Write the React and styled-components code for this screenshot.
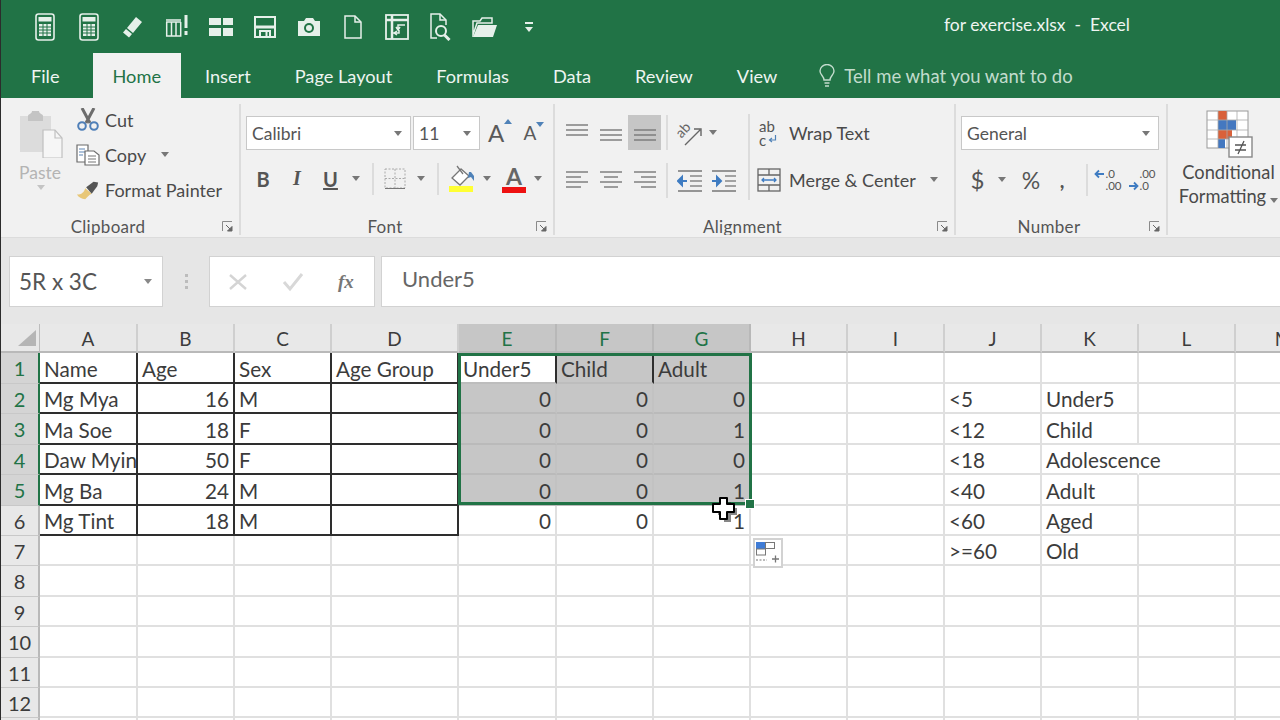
import React from "react";
import styled, { createGlobalStyle } from "styled-components";

const Global = createGlobalStyle`
  html, body { margin: 0; padding: 0; background: #fff; }
  * { box-sizing: border-box; }
`;

const Window = styled.div`
  width: 1280px; height: 720px; overflow: hidden;
  border-left: 1px solid #2c2c2c;
  font-family: Lato, "Open Sans", sans-serif;
  color: #444; background: #fff;
  display: flex; flex-direction: column;
`;
const TitleBar = styled.div`
  height: 53px; flex: none; background: #217346;
  display: flex; align-items: center;
`;
const Qat = styled.div`display: flex; align-items: center; padding-left: 22px;`;
const QatButton = styled.div`
  width: 44px; height: 30px; display: flex; align-items: center; justify-content: center;
`;
const Title = styled.div`
  margin-left: auto; padding: 0 150px 5px 0; color: #eef5f1; font-size: 17.5px; white-space: pre;
`;
const TabBar = styled.div`
  height: 45px; flex: none; background: #217346; display: flex; padding-left: 8px;
`;
const Tab = styled.div`
  height: 45px; padding: 0 ${p => (p.$active ? 20 : 22)}px;
  margin-right: ${p => p.$gap || 0}px;
  display: flex; align-items: center; font-size: 18.2px;
  color: ${p => (p.$active ? "#217346" : "#eef5f1")};
  background: ${p => (p.$active ? "#f1f1f1" : "transparent")};
`;
const TellMe = styled.div`
  display: flex; align-items: center; gap: 9px; margin-left: 20px;
  color: #c2dccd; font-size: 18.5px;
`;
const Ribbon = styled.div`
  height: 140px; flex: none; background: #f1f1f1; display: flex; padding: 6px 0 2px;
  border-bottom: 1px solid #dcdcdc;
`;
const Group = styled.div`
  width: ${p => p.$w}px; flex: none; display: flex; flex-direction: column; overflow: hidden;
  border-right: ${p => (p.$last ? "none" : "2px solid #dcdcdc")};
`;
const GroupBody = styled.div`
  flex: 1; min-height: 0; display: flex; padding-left: ${p => p.$pl || 0}px;
`;
const GroupFooter = styled.div`display: flex; align-items: center; height: 18px; flex: none;`;
const GroupLabel = styled.div`
  flex: 1; text-align: center; font-size: 17px; color: #555; letter-spacing: .3px;
`;
const Launcher = styled.div`width: 24px; flex: none; display: flex; justify-content: center;`;

const PasteCol = styled.div`
  width: 80px; flex: none; padding-top: 6px; display: flex; flex-direction: column; align-items: center;
  color: #b4b4b4; font-size: 17.5px;
`;
const PasteLabel = styled.div`margin-top: 3px; padding-right: 2px; line-height: 24px;`;
const ClipCol = styled.div`display: flex; flex-direction: column; margin: -2px 0 0 -5px;`;
const ClipRow = styled.div`
  height: 35px; display: flex; align-items: center; gap: 5px; font-size: 18px; color: #4a4a4a;
`;
const ClipIcon = styled.div`width: 24px; display: flex; justify-content: center;`;

const Caret = styled.span`
  display: inline-block; width: 0; height: 0;
  border-left: 4px solid transparent; border-right: 4px solid transparent;
  border-top: 5px solid ${p => p.$c || "#777"};
  margin-left: ${p => p.$ml || 0}px;
`;
const CaretUp = styled(Caret)`transform: rotate(180deg);`;
const Stack = styled.div`display: flex; flex-direction: column; flex: none; width: ${p => (p.$w ? `${p.$w}px` : "auto")}; gap: ${p => p.$gap || 0}px; padding-top: ${p => p.$pt || 0}px;`;
const Row = styled.div`display: flex; align-items: center; height: ${p => p.$h || 35}px;`;
const Btn = styled.div`
  width: ${p => p.$w}px; height: 35px; flex: none;
  display: flex; align-items: center; justify-content: center;
  background: ${p => (p.$on ? "#c6c6c6" : "transparent")};
  color: #555; font-size: ${p => p.$fs || 20}px;
  font-weight: ${p => p.$fw || 400}; font-style: ${p => p.$it ? "italic" : "normal"};
  font-family: ${p => p.$serif ? '"Liberation Serif", serif' : "inherit"};
  text-decoration: ${p => p.$ul ? "underline" : "none"};
`;
const VSep = styled.div`
  width: 2px; flex: none; height: ${p => p.$h || 32}px; background: #dcdcdc;
  margin: ${p => p.$mt || 0}px ${p => p.$mr ?? 5}px 0 ${p => p.$ml ?? 5}px;
`;
const Select = styled.div`
  width: ${p => p.$w}px; height: 34px; flex: none; margin-right: ${p => p.$mr || 0}px;
  background: #fff; border: 1px solid #c8c8c8;
  display: flex; align-items: center; justify-content: space-between;
  padding: 0 8px 0 5px; font-size: 17.5px; color: #555;
`;
const GrowA = styled.div`
  width: ${p => p.$w}px; display: flex; align-items: flex-start; justify-content: center;
  margin-left: ${p => p.$ml || 0}px;
  font-size: ${p => p.$fs}px; color: #5a5a5a; line-height: 1.15;
`;
const WideRow = styled.div`
  height: 35px; display: flex; align-items: center; font-size: 18px; color: #4a4a4a;
`;
const WideIcon = styled.div`width: 34px; flex: none; display: flex; justify-content: center; padding-right: 6px;`;
const AlignRight = styled.div`
  display: flex; flex-direction: column; gap: 12px; padding-top: 11px; margin-left: 5px;
`;
const StylesBody = styled.div`
  display: flex; flex-direction: column; align-items: center; padding: 6px 0 0 8px; width: 113px;
  font-size: 18.3px; line-height: 24px; color: #4a4a4a; white-space: nowrap;
`;
const StylesIcon = styled.div`height: 48px; margin-left: 2px; margin-bottom: 2px;`;

/* small glyph clusters that are real text next to a drawing */
const ColorGlyph = styled.div`
  width: 24px; display: flex; flex-direction: column; align-items: center;
  font-size: 23px; font-weight: 700; color: #666; line-height: 23px;
`;
const ColorBar = styled.div`width: 24px; height: 6px; background: #ee1111; margin-top: -1px;`;
const OrientBox = styled.div`
  position: relative; width: 28px; height: 26px;
`;
const OrientText = styled.span`
  position: absolute; left: 0; top: 1px; font-size: 14px; line-height: 17px; color: #666;
  transform: rotate(-48deg);
`;
const WrapGlyph = styled.div`
  width: 20px; font-size: 15px; line-height: 14px; color: #555; display: flex; flex-direction: column;
`;
const WrapLine = styled.div`display: flex; align-items: center; gap: 2px;`;
const DecimalBox = styled.div`
  display: grid; grid-template-columns: 11px auto; justify-content: center; font-size: 11.5px; line-height: 12px; color: #555;
  align-items: center; text-align: left;
`;

const FormulaBar = styled.div`
  height: 86px; flex: none; background: #e6e6e6;
  display: flex; padding: 18px 0 17px 8px; align-items: stretch;
`;
const Box = styled.div`
  background: #fff; border: 1px solid #d2d2d2; display: flex; align-items: center;
`;
const NameBox = styled(Box)`
  width: 154px; padding: 0 10px 0 9px; justify-content: space-between;
  font-size: 22.5px; color: #555; flex: none;
`;
const Dots = styled.div`
  width: 46px; flex: none; display: flex; align-items: center; justify-content: center;
`;
const DotStack = styled.div`display: flex; flex-direction: column; gap: 3px;
  & > i { width: 3px; height: 3px; background: #bcbcbc; display: block; }`;
const FxBox = styled(Box)`width: 166px; flex: none; padding-left: 18px; gap: 34px;`;
const Fx = styled.span`
  font-family: "Liberation Serif", serif; font-style: italic; font-weight: 700; font-size: 19px; color: #777;
`;
const FormulaInput = styled(Box)`
  flex: 1; margin-left: 6px; padding: 0 0 6px 20px; font-size: 22px; color: #666; border-right: none;
`;

const Sheet = styled.div`
  position: relative; display: grid; flex: 1; min-height: 0;
  grid-template-columns: 39px 98px 97px 97px 127px 98px 97px 97px 97px 97px 97px 97px 97px 97px;
  grid-template-rows: 29px 31px 30px 31px 30px 31px 30px 30px 31px 30px 31px 30px 30px;
  font-size: 20.7px; color: #3c3c3c;
`;
const Corner = styled.div`
  background: #e8e8e8; display: flex; align-items: flex-end; justify-content: flex-end; padding: 0 3px 5px 0;
  border-bottom: 2px solid #b9b9b9; border-right: 1px solid #bdbdbd;
`;
const ColHead = styled.div`
  display: flex; align-items: center; justify-content: center; font-size: 19px; padding-top: 1px;
  background: ${p => (p.$sel ? "#c6c6c6" : "#e8e8e8")};
  color: ${p => (p.$sel ? "#217346" : "#3c3c3c")};
  border-right: 2px solid ${p => (p.$sel ? "#b8b8b8" : "#cfcfcf")};
  border-bottom: 2px solid #b9b9b9;
`;
const RowHead = styled.div`
  display: flex; align-items: center; justify-content: center; font-size: 20px;
  background: ${p => (p.$sel ? "#d4d4d4" : "#e8e8e8")};
  color: ${p => (p.$sel ? "#217346" : "#3c3c3c")};
  border-right: 2px solid ${p => (p.$sel ? "#217346" : "#b9b9b9")};
  border-bottom: 1px solid #c8c8c8;
`;
const Cell = styled.div`
  display: flex; align-items: center; white-space: nowrap; min-width: 0;
  padding: 2px 4px 0;
  justify-content: ${p => (p.$num ? "flex-end" : "flex-start")};
  background: ${p => (p.$grey ? "#c6c6c6" : "transparent")};
  border-right: 2px solid ${p => p.$r || "#e0e0e0"};
  border-bottom: 2px solid ${p => p.$b || "#e0e0e0"};
`;
const Selection = styled.div`
  position: absolute; inset: 0 -1px 1px -1px; grid-column: 6 / 9; grid-row: 2 / 7;
  border: 3px solid #217346; pointer-events: none;
`;
const Handle = styled.div`
  position: absolute; right: -5px; bottom: -6px; width: 8px; height: 8px;
  background: #217346; outline: 1px solid #fff;
`;
const PasteOptions = styled.div`
  position: absolute; grid-column: 9; grid-row: 8; top: 2px; left: 2px; width: 30px; height: 30px;
  background: #fff; border: 2px solid #d2d2d2; display: flex; align-items: center; justify-content: center;
`;
const Pointer = styled.div`
  position: absolute; grid-column: 8; grid-row: 7; left: 58px; top: -9px; width: 26px; height: 26px;
`;

/* ---------- icons ---------- */
const Q = "#e6f0ea";
const Calc = () => (
  <svg width="20" height="28" viewBox="0 0 20 28" fill="none">
    <rect x="1" y="1" width="18" height="26" rx="2.5" stroke={Q} strokeWidth="1.6" />
    <rect x="3.5" y="4" width="13" height="4.5" fill={Q} />
    <path d="M4 11h12v12H4z" fill={Q} />
    <path d="M4 14h12M4 17h12M4 20h12M8 11v12M12 11v12" stroke="#217346" strokeWidth="1" />
  </svg>
);
const Eraser = () => (
  <svg width="22" height="24" viewBox="0 0 22 24">
    <path d="M14 2l6 5-9 11-6-5z" fill={Q} />
    <path d="M4 14l6 5-3 3.500-6-5z" fill={Q} />
  </svg>
);
const ColsBang = () => (
  <svg width="24" height="26" viewBox="0 0 24 26" fill="none">
    <path d="M1 6h15M1 8h15M1.700 8v14h14V8M6.500 8v14M11 8v14" stroke={Q} strokeWidth="1.500" />
    <path d="M21 1v13" stroke={Q} strokeWidth="3" />
    <rect x="19.500" y="17" width="3" height="4" fill={Q} />
  </svg>
);
const Blocks = () => (
  <svg width="24" height="20" viewBox="0 0 24 20" fill={Q}>
    <rect x="0" y="1" width="12" height="7" /><rect x="0" y="11" width="12" height="8" />
    <rect x="14" y="1" width="10" height="7" /><rect x="14" y="11" width="10" height="8" />
  </svg>
);
const Save = () => (
  <svg width="22" height="22" viewBox="0 0 22 22" fill="none" stroke={Q} strokeWidth="2">
    <rect x="1" y="1" width="20" height="20" />
    <path d="M1 11h20" strokeWidth="3" />
    <path d="M6 21v-6h10v6" />
    <path d="M12.500 16v4" />
  </svg>
);
const Camera = () => (
  <svg width="24" height="20" viewBox="0 0 24 20">
    <path d="M1 4h6l2-3h7l2 3h5v15H1z" fill={Q} />
    <circle cx="12" cy="11" r="5" fill="#217346" />
    <circle cx="12" cy="11" r="3" fill={Q} />
  </svg>
);
const NewDoc = () => (
  <svg width="18" height="24" viewBox="0 0 18 24" fill="none" stroke={Q} strokeWidth="1.500">
    <path d="M1 1h10l6 6v16H1z" /><path d="M11 1v6h6" />
  </svg>
);
const Pivot = () => (
  <svg width="24" height="26" viewBox="0 0 24 26" fill="none" stroke={Q}>
    <rect x="1" y="1" width="22" height="24" strokeWidth="1.800" />
    <path d="M1 6h22M7 1v24" strokeWidth="2.500" />
    <path d="M20 11h-7v4M11 13l2 3 2-3M6 19h8v-3M12 21l-3-2 3-2" strokeWidth="1.500" />
  </svg>
);
const Preview = () => (
  <svg width="22" height="28" viewBox="0 0 22 28" fill="none" stroke={Q} strokeWidth="1.500">
    <path d="M7 25H1V1h9l6 6v5" /><path d="M10 1v6h6" />
    <circle cx="11" cy="18" r="5" strokeWidth="2" />
    <path d="M14.500 22l5 5" strokeWidth="3" />
  </svg>
);
const Folder = () => (
  <svg width="26" height="22" viewBox="0 0 26 22">
    <path d="M1 21V5h7l2-3h10v5H5L1 19z" fill="none" stroke={Q} strokeWidth="1.500" />
    <path d="M1 21l5-12h19l-4 12z" fill={Q} />
  </svg>
);
const QatMore = () => (
  <svg width="10" height="12" viewBox="0 0 10 12" fill={Q}>
    <rect x="1" y="1" width="8" height="2" /><path d="M1 6h8l-4 5z" />
  </svg>
);
const Bulb = () => (
  <svg width="16" height="24" viewBox="0 0 16 24" fill="none" stroke="#c2dccd" strokeWidth="1.400">
    <path d="M5 16c0-4-4-5-4-9a7 6.500 0 0 1 14 0c0 4-4 5-4 9z" />
    <path d="M5.500 19h5M6 22h4" />
  </svg>
);
const LauncherIcon = () => (
  <svg width="11" height="11" viewBox="0 0 11 11" fill="none">
    <path d="M.5 10V.5H10" stroke="#8a8a8a" />
    <path d="M4 4l5 5M10 5.500V10H5.500z" stroke="#666" fill="#666" />
  </svg>
);
const PasteIcon = () => (
  <svg width="44" height="48" viewBox="0 0 44 48">
    <path d="M1 6h31v36H1z" fill="#dcdcdc" />
    <path d="M9 6c0-2 4-2 4-5h7c0 3 4 3 4 5v5H9z" fill="#c4c4c4" />
    <path d="M24 20h12l7 8v20H24z" fill="#f6f6f6" stroke="#c0c0c0" strokeWidth="1.200" />
    <path d="M36 20v8h7" fill="none" stroke="#c0c0c0" strokeWidth="1.200" />
  </svg>
);
const Scissors = () => (
  <svg width="24" height="23" viewBox="0 0 24 23" fill="none">
    <path d="M6 0l8 15M18 0l-8 15" stroke="#6d6d6d" strokeWidth="3" />
    <circle cx="6" cy="18" r="3.800" stroke="#4f7fb8" strokeWidth="2" />
    <circle cx="18" cy="18" r="3.800" stroke="#4f7fb8" strokeWidth="2" />
  </svg>
);
const CopyIcon = () => (
  <svg width="24" height="22" viewBox="0 0 24 22" fill="#fff" stroke="#6b6b6b" strokeWidth="1.200">
    <path d="M1 1h11v17H1z" />
    <path d="M3 5h6M3 8h6M3 11h4" stroke="#5f86b6" />
    <path d="M9 7h9l5 4v10H9z" />
    <path d="M12 12h8M12 15h8M12 18h8" stroke="#777" />
  </svg>
);
const Brush = () => (
  <svg width="26" height="20" viewBox="0 0 26 20">
    <path d="M1 15c5 0 8-3 9-7l7 6c-3 1-5 4-7 6-4 0-7-2-9-5z" fill="#e8c777" />
    <path d="M11 7l8-6 5 1-1 4-6 8z" fill="#555" />
  </svg>
);
const BordersIcon = () => (
  <svg width="22" height="22" viewBox="0 0 22 22" fill="none" stroke="#aaa" strokeDasharray="2 1.500">
    <rect x="1" y="1" width="20" height="19" /><path d="M11 1v19M1 10.500h20" />
    <path d="M1 20.500h20" stroke="#777" strokeDasharray="none" />
  </svg>
);
const FillIcon = () => (
  <svg width="26" height="28" viewBox="0 0 26 28" fill="none">
    <path d="M12 4l-9 9 8 7 9-9z" fill="#fff" stroke="#777" strokeWidth="1.300" />
    <path d="M8 1l6 8" stroke="#777" strokeWidth="1.300" />
    <path d="M20 7h2l3 4v5l-3-4-3 1z" fill="#4f82b8" />
    <rect x="0" y="21" width="24" height="6" fill="#ffff33" />
  </svg>
);
const Lines = ({ widths, y = 0, h = 20, align = "left", c = "#777" }) => {
  const w = 22;
  return (
    <svg width={w} height={h} viewBox={`0 0 ${w} ${h}`} fill="none" stroke={c} strokeWidth="1.400">
      {widths.map((lw, i) => {
        const x = align === "left" ? 0 : align === "right" ? w - lw : (w - lw) / 2;
        return <path key={i} d={`M${x} ${y + i * 5 + 1}h${lw}`} />;
      })}
    </svg>
  );
};
const OrientArrow = () => (
  <svg width="28" height="26" viewBox="0 0 28 26" fill="none">
    <path d="M10 25L25 10M19 9h7v7" stroke="#666" strokeWidth="1.400" />
  </svg>
);
const Dent = ({ flip }) => (
  <svg width="26" height="22" viewBox="0 0 26 22" fill="none">
    <path d="M1 1h24M1 21h24" stroke="#777" strokeWidth="1.500" />
    <path d={flip ? "M14 6h11M14 11h11M14 16h11" : "M13 6h12M13 11h12M13 16h12"} stroke="#888" strokeWidth="1.400" />
    {flip
      ? <path d="M1 11h6M6 7l4 4-4 4z" stroke="#3f7cc2" strokeWidth="2" fill="#3f7cc2" />
      : <path d="M10 11H4M5 7l-4 4 4 4z" stroke="#3f7cc2" strokeWidth="2" fill="#3f7cc2" />}
  </svg>
);
const ReturnArrow = () => (
  <svg width="9" height="9" viewBox="0 0 9 9" fill="none" stroke="#4f82b8" strokeWidth="1.200">
    <path d="M7.500 0v5H2M4 3L1.500 5 4 7" />
  </svg>
);
const MergeIcon = () => (
  <svg width="24" height="24" viewBox="0 0 24 24" fill="none" stroke="#666" strokeWidth="1.300">
    <rect x="1" y="1" width="22" height="22" />
    <path d="M1 7h22M1 17h22M12 1v6M12 17v6" />
    <path d="M5 12h14M7 10l-2 2 2 2M17 10l2 2-2 2" stroke="#3f7cc2" />
  </svg>
);
const ArrowLeft = () => (
  <svg width="11" height="10" viewBox="0 0 11 10" fill="none" stroke="#3f7cc2" strokeWidth="1.800"><path d="M10 5H2M5 1.500L1.500 5 5 8.500" /></svg>
);
const ArrowRight = () => (
  <svg width="11" height="10" viewBox="0 0 11 10" fill="none" stroke="#3f7cc2" strokeWidth="1.800"><path d="M1 5h8M6 1.500L9.500 5 6 8.500" /></svg>
);
const CondFormat = () => (
  <svg width="48" height="48" viewBox="0 0 48 48">
    <rect x="1" y="1" width="41" height="37" fill="#fff" stroke="#999" />
    <rect x="12" y="1" width="9" height="9" fill="#d9613a" />
    <rect x="12" y="10" width="18" height="10" fill="#4478c0" />
    <rect x="12" y="20" width="14" height="9" fill="#d9613a" />
    <rect x="12" y="29" width="7" height="9" fill="#4478c0" />
    <path d="M1 10h41M1 20h41M1 29h41M12 1v37M21 1v37M31 1v37" stroke="#aaa" fill="none" strokeWidth=".8" />
    <rect x="23" y="27" width="23" height="20" fill="#fff" stroke="#888" strokeWidth="1.400" />
    <path d="M29 35h11M29 40h11M38 31l-6 13" stroke="#555" strokeWidth="1.300" fill="none" />
  </svg>
);
const CornerTri = () => (
  <svg width="18" height="16" viewBox="0 0 18 16"><path d="M18 0v16H0z" fill="#b5b5b5" /></svg>
);
const X = () => (
  <svg width="20" height="20" viewBox="0 0 20 20" stroke="#d4d4d4" strokeWidth="2.400"><path d="M2 3l16 14M18 3L2 17" /></svg>
);
const Check = () => (
  <svg width="22" height="20" viewBox="0 0 22 20" fill="none" stroke="#d8d8d8" strokeWidth="3"><path d="M2 10l6 7L20 2" /></svg>
);
const PasteOptIcon = () => (
  <svg width="24" height="22" viewBox="0 0 24 22" fill="none">
    <rect x="0.500" y="0.500" width="9" height="6" fill="#3f7cd6" stroke="#3f7cd6" />
    <rect x="9.500" y="0.500" width="9" height="6" fill="#fff" stroke="#777" />
    <rect x="0.500" y="7" width="9" height="6" fill="#fff" stroke="#777" />
    <path d="M0 18h11" stroke="#777" strokeDasharray="2 1.500" />
    <path d="M16 17h7M19.500 13.500v7" stroke="#777" strokeWidth="1.300" />
  </svg>
);
const CrossCursor = () => (
  <svg width="26" height="26" viewBox="0 0 26 26">
    <path d="M10 3h7v6h6v7h-6v7h-7v-7H4V9h6z" fill="#222" opacity=".55" transform="translate(2 2)" />
    <path d="M8 1h7v6h7v8h-7v7H8v-7H1V7h7z" fill="#fff" stroke="#000" strokeWidth="2" strokeLinejoin="round" />
  </svg>
);

/* ---------- data ---------- */
const colNames = ["A", "B", "C", "D", "E", "F", "G", "H", "I", "J", "K", "L", "M"];
const tableRows = [
  ["Name", "Age", "Sex", "Age Group", "Under5", "Child", "Adult"],
  ["Mg Mya", 16, "M", "", 0, 0, 0],
  ["Ma Soe", 18, "F", "", 0, 0, 1],
  ["Daw Myin", 50, "F", "", 0, 0, 0],
  ["Mg Ba", 24, "M", "", 0, 0, 1],
  ["Mg Tint", 18, "M", "", 0, 0, 1],
];
const lookup = [
  ["<5", "Under5"], ["<12", "Child"], ["<18", "Adolescence"],
  ["<40", "Adult"], ["<60", "Aged"], [">=60", "Old"],
];
const DARK = "#2e2e2e";

function cellFor(r, c) {
  const base = tableRows[r - 1]?.[c];
  const lk = r >= 2 && r <= 7 && (c === 9 || c === 10) ? lookup[r - 2][c - 9] : undefined;
  const text = base !== undefined ? base : lk ?? "";
  const props = { $num: typeof text === "number" };
  if (r <= 6 && c <= 3) { props.$r = DARK; props.$b = DARK; }
  if (r === 1 && (c === 4 || c === 5)) props.$r = DARK;
  const inSel = r <= 5 && c >= 4 && c <= 6;
  if (inSel && !(r === 1 && c === 4)) props.$grey = true;
  if (inSel && r > 1) { props.$r = "#c2c2c2"; props.$b = "#bababa"; }
  if (r === 1 && c >= 4 && c <= 6) props.$b = "#bdbdbd";
  if (r === 4 && c === 10) props.$r = "transparent";
  return { text, props };
}

const rowsCount = 13;

export default function App() {
  return (
    <Window>
      <Global />
      <TitleBar>
        <Qat>
          {[<Calc />, <Calc />, <Eraser />, <ColsBang />, <Blocks />, <Save />, <Camera />, <NewDoc />, <Pivot />, <Preview />, <Folder />, <QatMore />].map((ic, i) => (
            <QatButton key={i}>{ic}</QatButton>
          ))}
        </Qat>
        <Title>for exercise.xlsx  -  Excel</Title>
      </TitleBar>
      <TabBar>
        <Tab $gap={11}>File</Tab>
        <Tab $active $gap={2}>Home</Tab>
        <Tab>Insert</Tab>
        <Tab>Page Layout</Tab>
        <Tab>Formulas</Tab>
        <Tab>Data</Tab>
        <Tab>Review</Tab>
        <Tab>View</Tab>
        <TellMe><Bulb />Tell me what you want to do</TellMe>
      </TabBar>

      <Ribbon>
        <Group $w={240}>
          <GroupBody>
            <PasteCol>
              <PasteIcon />
              <PasteLabel>Paste</PasteLabel>
              <Caret $c="#c4c4c4" />
            </PasteCol>
            <ClipCol>
              <ClipRow><ClipIcon><Scissors /></ClipIcon>Cut</ClipRow>
              <ClipRow><ClipIcon><CopyIcon /></ClipIcon>Copy<Caret $ml={10} /></ClipRow>
              <ClipRow><ClipIcon><Brush /></ClipIcon>Format Painter</ClipRow>
            </ClipCol>
          </GroupBody>
          <GroupFooter><GroupLabel>Clipboard</GroupLabel><Launcher><LauncherIcon /></Launcher></GroupFooter>
        </Group>

        <Group $w={314}>
          <GroupBody $pl={5}>
            <Stack $pt={12} $gap={11}>
              <Row $h={34}>
                <Select $w={165} $mr={2}>Calibri<Caret /></Select>
                <Select $w={67}>11<Caret /></Select>
                <GrowA $w={36} $fs={24} $ml={2}>A<CaretUp $c="#4f82b8" /></GrowA>
                <GrowA $w={32} $fs={19}>A<Caret $c="#4f82b8" /></GrowA>
              </Row>
              <Row>
                <Btn $w={34} $fw={700}>B</Btn>
                <Btn $w={34} $it $serif $fw={700}>I</Btn>
                <Btn $w={33} $fw={700} $ul>U</Btn>
                <Btn $w={18}><Caret /></Btn>
                <VSep $ml={7} $mr={7} />
                <Btn $w={28}><BordersIcon /></Btn>
                <Btn $w={24}><Caret /></Btn>
                <VSep $ml={4} $mr={4} />
                <Btn $w={38}><FillIcon /></Btn>
                <Btn $w={12}><Caret /></Btn>
                <Btn $w={42}><ColorGlyph>A<ColorBar /></ColorGlyph></Btn>
                <Btn $w={6}><Caret /></Btn>
              </Row>
            </Stack>
          </GroupBody>
          <GroupFooter><GroupLabel>Font</GroupLabel><Launcher><LauncherIcon /></Launcher></GroupFooter>
        </Group>

        <Group $w={401}>
          <GroupBody $pl={5}>
            <Stack $pt={11} $gap={13} $w={188}>
              <Row>
                <Btn $w={34}><Lines widths={[22, 22, 22]} y={1} /></Btn>
                <Btn $w={34}><Lines widths={[22, 22, 22]} y={6} /></Btn>
                <Btn $w={33} $on><Lines widths={[22, 22, 22]} y={9} h={26} /></Btn>
                <VSep $h={35} />
                <Btn $w={32}><OrientBox><OrientArrow /><OrientText>ab</OrientText></OrientBox></Btn>
                <Btn $w={16}><Caret /></Btn>
              </Row>
              <Row>
                <Btn $w={34}><Lines widths={[22, 15, 22, 15]} /></Btn>
                <Btn $w={34}><Lines widths={[22, 14, 22, 14]} align="center" /></Btn>
                <Btn $w={33}><Lines widths={[22, 15, 22, 15]} align="right" /></Btn>
                <VSep $h={35} />
                <Btn $w={34}><Dent /></Btn>
                <Btn $w={34}><Dent flip /></Btn>
              </Row>
            </Stack>
            <VSep $h={86} $ml={0} $mr={0} $mt={10} />
            <AlignRight>
              <WideRow>
                <WideIcon><WrapGlyph><span>ab</span><WrapLine>c<ReturnArrow /></WrapLine></WrapGlyph></WideIcon>
                Wrap Text
              </WideRow>
              <WideRow><WideIcon><MergeIcon /></WideIcon>Merge &amp; Center<Caret $ml={14} /></WideRow>
            </AlignRight>
          </GroupBody>
          <GroupFooter><GroupLabel>Alignment</GroupLabel><Launcher><LauncherIcon /></Launcher></GroupFooter>
        </Group>

        <Group $w={212}>
          <GroupBody $pl={5}>
            <Stack $pt={12} $gap={12}>
              <Select $w={198}>General<Caret /></Select>
              <Row>
                <Btn $w={33} $fs={24}>$</Btn>
                <Btn $w={16}><Caret /></Btn>
                <Btn $w={42} $fs={23}>%</Btn>
                <Btn $w={20} $fs={20} $fw={700}>,</Btn>
                <VSep $ml={14} $mr={3} />
                <Btn $w={34}><DecimalBox><ArrowLeft /><span>.0</span><span /><span>.00</span></DecimalBox></Btn>
                <Btn $w={34}><DecimalBox><span /><span>.00</span><ArrowRight /><span>.0</span></DecimalBox></Btn>
              </Row>
            </Stack>
          </GroupBody>
          <GroupFooter><GroupLabel>Number</GroupLabel><Launcher><LauncherIcon /></Launcher></GroupFooter>
        </Group>

        <Group $w={113} $last>
          <StylesBody>
            <StylesIcon><CondFormat /></StylesIcon>
            <div>Conditional</div>
            <div>Formatting<Caret $ml={4} /></div>
          </StylesBody>
        </Group>
      </Ribbon>

      <FormulaBar>
        <NameBox>5R x 3C<Caret $c="#888" /></NameBox>
        <Dots><DotStack><i /><i /><i /></DotStack></Dots>
        <FxBox><X /><Check /><Fx>fx</Fx></FxBox>
        <FormulaInput>Under5</FormulaInput>
      </FormulaBar>

      <Sheet>
        <Corner><CornerTri /></Corner>
        {colNames.map((n, i) => <ColHead key={n} $sel={i >= 4 && i <= 6}>{n}</ColHead>)}
        {Array.from({ length: rowsCount }, (_, k) => k + 1).map(r => (
          <React.Fragment key={r}>
            <RowHead $sel={r <= 5}>{r === 13 ? "" : r}</RowHead>
            {colNames.map((n, c) => {
              const { text, props } = cellFor(r, c);
              return <Cell key={n} {...props}>{text}</Cell>;
            })}
          </React.Fragment>
        ))}
        <Selection><Handle /></Selection>
        <PasteOptions><PasteOptIcon /></PasteOptions>
        <Pointer><CrossCursor /></Pointer>
      </Sheet>
    </Window>
  );
}
